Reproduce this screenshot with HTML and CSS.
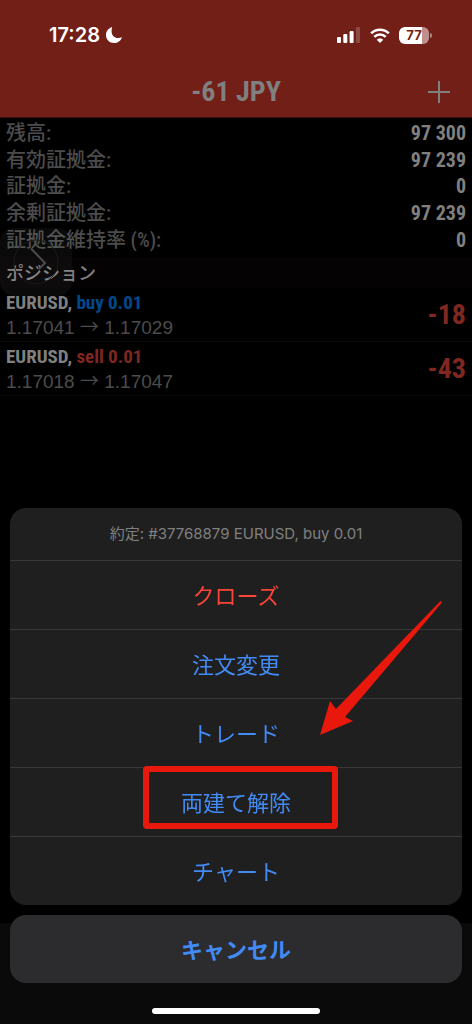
FILE: index.html
```html
<!DOCTYPE html>
<html lang="ja">
<head>
<meta charset="utf-8">
<meta name="viewport" content="width=device-width, initial-scale=1">
<title>-61 JPY</title>
<link rel="stylesheet" href="styles.css">
</head>
<body>
<div class="app">
  <header class="header">
    <div class="status">
      <div class="clock">
        <span>17:28</span>
        <svg class="moon" viewBox="0 0 16 16" aria-hidden="true"><path d="M6.200 0C2.600 1 0 4.200 0 8C0 12.600 3.500 16 7.900 16C11.700 16 14.800 13.800 16 10.200C14.900 10.700 13.600 11 12.200 11C8.400 11 5.600 8.200 5.600 4.400C5.600 2.800 5.700 1.400 6.200 0Z"/></svg>
      </div>
      <div class="signals">
        <svg class="bars" viewBox="0 0 24 16" aria-hidden="true"><rect x="0" y="10" width="4" height="6" rx="1"/><rect x="6.300" y="7" width="4" height="9" rx="1"/><rect x="12.600" y="4" width="4" height="12" rx="1"/><rect x="19" y="0" width="4" height="16" rx="1" opacity=".2"/></svg>
        <svg class="wifi" viewBox="0 0 20 15" aria-hidden="true"><path d="M1.200 5.400A12.500 12.500 0 0 1 18.800 5.400M4.300 8.900A8 8 0 0 1 15.700 8.900" fill="none" stroke="#fff" stroke-width="2.600"/><path d="M6.700 11.700A4.900 4.900 0 0 1 13.300 11.700L10 15Z"/></svg>
        <div class="battery"><span class="cell">77</span><span class="nub"></span></div>
      </div>
    </div>
    <div class="titlebar">
      <h1 class="title">-61 JPY</h1>
      <button class="add" type="button" aria-label="追加"><svg viewBox="0 0 22 22" aria-hidden="true"><path d="M11 0V22M0 11H22"/></svg></button>
    </div>
  </header>

  <main class="main">
    <dl class="account">
      <div class="entry"><dt>残高:</dt><dd>97 300</dd></div>
      <div class="entry"><dt>有効証拠金:</dt><dd>97 239</dd></div>
      <div class="entry"><dt>証拠金:</dt><dd>0</dd></div>
      <div class="entry"><dt>余剰証拠金:</dt><dd>97 239</dd></div>
      <div class="entry"><dt>証拠金維持率 (%):</dt><dd>0</dd></div>
    </dl>
    <h2 class="section">ポジション</h2>
    <ul class="positions">
      <li class="position">
        <div><div class="symbol">EURUSD, <span class="buy">buy 0.01</span></div><div class="prices">1.17041 <span class="to">→</span> 1.17029</div></div>
        <div class="profit">-18</div>
      </li>
      <li class="position">
        <div><div class="symbol">EURUSD, <span class="sell">sell 0.01</span></div><div class="prices">1.17018 <span class="to">→</span> 1.17047</div></div>
        <div class="profit">-43</div>
      </li>
    </ul>
    <div class="assist" aria-hidden="true"><svg viewBox="0 0 46 46"><circle cx="23" cy="23" r="22"/><path d="M18 9.500L32 24L26 30"/></svg></div>
  </main>
  <footer class="tabbar"></footer>
</div>

<div class="overlay">
  <div class="sheet" role="dialog" aria-labelledby="sheet-title">
    <p class="sheet-title" id="sheet-title">約定: #37768879 EURUSD, buy 0.01</p>
    <button class="action danger" type="button">クローズ</button>
    <button class="action" type="button">注文変更</button>
    <button class="action" type="button">トレード</button>
    <button class="action marked" type="button">両建て解除</button>
    <button class="action" type="button">チャート</button>
    <svg class="arrow" viewBox="0 0 124 136" aria-hidden="true"><path d="M1 135L11 101L17 109L121 1.500Q122.500 .500 123 2.500L26 117L34 121Z"/></svg>
  </div>
  <button class="cancel" type="button">キャンセル</button>
  <div class="home"></div>
</div>
</body>
</html>
```
FILE: styles.css
```css
*,
*::after { box-sizing: border-box; }

body {
  margin: 0;
  background: #000;
  color: #808080;
  font-family: Inter, "Noto Sans CJK JP", sans-serif;
}

button {
  border: 0;
  padding: 0;
  background: none;
  font-family: inherit;
}

h1, h2, p, dl, dd, ul { margin: 0; padding: 0; }

.app {
  display: flex;
  flex-direction: column;
  min-height: 100vh;
}

.header {
  background: #711f17;
  padding-top: 22px;
  border-bottom: 1px solid #3a0f0b;
}

.status {
  display: flex;
  justify-content: space-between;
  align-items: center;
  height: 26px;
  padding: 0 40px 0 49px;
  color: #fff;
}

.clock {
  display: flex;
  align-items: center;
  gap: 6px;
  font-size: 20px;
  font-weight: 600;
}

.status svg { fill: #fff; }
.moon { width: 16px; height: 16px; }

.signals {
  display: flex;
  align-items: center;
  gap: 9px;
}

.bars { width: 24px; height: 16px; }
.wifi { width: 20px; height: 15px; }

.battery {
  display: flex;
  align-items: center;
  gap: 1px;
}

.cell {
  width: 30px;
  height: 17px;
  border-radius: 6px;
  background: linear-gradient(90deg, #fff 77%, #c08f8b 77%);
  color: #711f17;
  font-size: 13px;
  line-height: 17px;
  font-weight: 700;
  text-align: center;
}

.nub {
  width: 2px;
  height: 5px;
  border-radius: 0 2px 2px 0;
  background: #b08480;
}

.titlebar {
  display: grid;
  grid-template-columns: 1fr auto 1fr;
  align-items: center;
  height: 69px;
  padding: 18px 22px 0;
}

.title {
  grid-column: 2;
  font: 700 28px/34px "Liberation Sans Narrow", "Roboto Condensed", Roboto, sans-serif;
}

.add { justify-self: end; height: 22px; }

.add svg {
  display: block;
  width: 22px;
  height: 22px;
  stroke: #808080;
  stroke-width: 2;
}

.main { position: relative; flex: 1; }

.account {
  display: grid;
  grid-auto-rows: 1fr;
  height: 133px;
  margin: 2px 6px 4px;
}

.entry {
  display: flex;
  justify-content: space-between;
  align-items: center;
  line-height: 26px;
}

.entry dt {
  color: #4c4c4c;
  font-family: "Liberation Sans Narrow", "Roboto Condensed", "Noto Sans CJK JP", sans-serif;
  font-size: 20px;
  font-weight: 500;
}

.entry dd {
  font: 700 20px/26px "Liberation Sans Narrow", "Roboto Condensed", Roboto, sans-serif;
}

.section {
  padding: 0 6px;
  background: #040203;
  font: 500 18px/31px "Noto Sans CJK JP", sans-serif;
}

.positions { list-style: none; }

.position {
  display: flex;
  justify-content: space-between;
  align-items: center;
  height: 54px;
  padding: 0 6px;
  border-bottom: 1px solid #0a0a0a;
}

.symbol {
  font: 700 19px/25px "Liberation Sans Narrow", "Roboto Condensed", Roboto, sans-serif;
}

.buy { color: #004a8c; }
.sell { color: #7f2720; }

.prices {
  color: #4c4c4c;
  font: 19px/25px "Liberation Sans", "Noto Sans CJK JP", sans-serif;
}

.to { font-family: "Noto Sans CJK JP", sans-serif; line-height: 1; }

.profit {
  color: #7f2720;
  font: 700 28px/34px "Liberation Sans Narrow", "Roboto Condensed", Roboto, sans-serif;
}

.assist {
  position: absolute;
  top: 110px;
  left: 0;
  display: grid;
  place-items: center;
  width: 72px;
  height: 68px;
  border-radius: 14px;
  background: rgba(255, 255, 255, .04);
}

.assist svg {
  width: 46px;
  height: 46px;
  fill: none;
  stroke: #1a1a1a;
}

.assist path { stroke: #4c4c4c; stroke-width: 2; }

.tabbar { height: 101px; background: #0a0a0a; }

.overlay {
  position: fixed;
  inset: auto 0 0;
  display: flex;
  flex-direction: column;
  gap: 10px;
  padding: 0 10px 10px;
}

.sheet {
  position: relative;
  display: flex;
  flex-direction: column;
  border-radius: 16px;
  background: #1f1f1f;
}

.sheet-title {
  font-size: 15px;
  line-height: 52px;
  text-align: center;
}

.action {
  position: relative;
  height: 69px;
  padding-bottom: 3px;
  border-top: 1px solid #383838;
  color: #428bf5;
  font-size: 22px;
}

.danger { color: #f9443a; }

.marked::after {
  content: "";
  position: absolute;
  top: -2px;
  left: calc(50% - 93px);
  width: 195px;
  height: 63px;
  border: 6px solid #e8190c;
  border-radius: 4px;
}

.arrow {
  position: absolute;
  top: 92px;
  right: 19px;
  width: 124px;
  height: 136px;
  fill: #e8190c;
}

.cancel {
  height: 68px;
  padding-bottom: 3px;
  border-radius: 16px;
  background: #2c2c2e;
  color: #428bf5;
  font-size: 22px;
  font-weight: 700;
}

.home {
  align-self: center;
  width: 168px;
  height: 6px;
  margin-top: 15px;
  border-radius: 3px;
  background: #fff;
}
```
